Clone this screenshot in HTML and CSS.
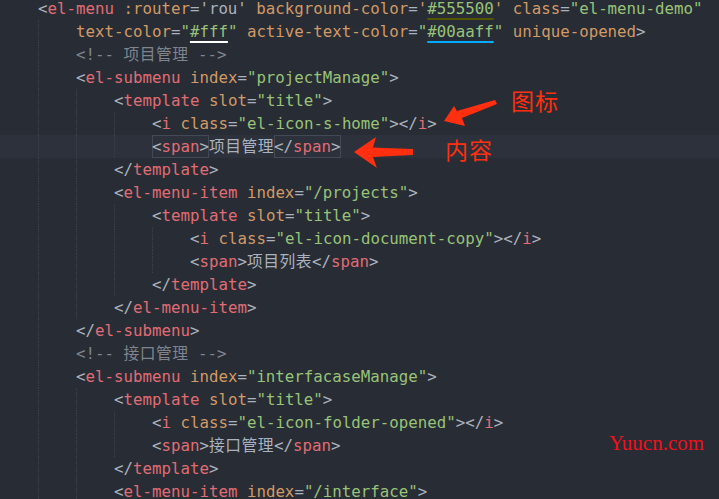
FILE: index.html
```html
<!DOCTYPE html>
<html>
<head>
<meta charset="utf-8">
<link rel="stylesheet" href="styles.css">
</head>
<body>
<div class="editor">
  <div class="code">
    <div class="ln"><span class="ind"></span>&lt;<span class="t">el-menu</span> <span class="a">:router</span>='rou' <span class="a">background-color</span>=<span class="a">'</span><span class="s u-olive">#555500</span><span class="a">'</span> <span class="a">class</span>=<span class="s">"el-menu-demo"</span></div>
    <div class="ln"><span class="ind"></span><span class="ind"></span><span class="a">text-color</span>=<span class="s">"<span class="u-white">#fff</span>"</span> <span class="a">active-text-color</span>=<span class="s">"<span class="u-blue">#00aaff</span>"</span> <span class="a">unique-opened</span>&gt;</div>
    <div class="ln"><span class="ind"></span><span class="ind"></span><span class="c">&lt;!-- <span class="cjk">项目管理</span> --&gt;</span></div>
    <div class="ln"><span class="ind"></span><span class="ind"></span>&lt;<span class="t">el-submenu</span> <span class="a">index</span>=<span class="s">"projectManage"</span>&gt;</div>
    <div class="ln"><span class="ind"></span><span class="ind"></span><span class="ind"></span>&lt;<span class="t">template</span> <span class="a">slot</span>=<span class="s">"title"</span>&gt;</div>
    <div class="ln"><span class="ind"></span><span class="ind"></span><span class="ind"></span><span class="ind"></span>&lt;<span class="t">i</span> <span class="a">class</span>=<span class="s">"el-icon-s-home"</span>&gt;&lt;/<span class="t">i</span>&gt;</div>
    <div class="ln cur"><span class="ind"></span><span class="ind"></span><span class="ind"></span><span class="ind"></span><span class="match">&lt;<span class="t">span</span>&gt;</span><span class="cjk">项目管理</span><span class="match">&lt;/<span class="t">span</span>&gt;</span></div>
    <div class="ln"><span class="ind"></span><span class="ind"></span><span class="ind"></span>&lt;/<span class="t">template</span>&gt;</div>
    <div class="ln"><span class="ind"></span><span class="ind"></span><span class="ind"></span>&lt;<span class="t">el-menu-item</span> <span class="a">index</span>=<span class="s">"/projects"</span>&gt;</div>
    <div class="ln"><span class="ind"></span><span class="ind"></span><span class="ind"></span><span class="ind"></span>&lt;<span class="t">template</span> <span class="a">slot</span>=<span class="s">"title"</span>&gt;</div>
    <div class="ln"><span class="ind"></span><span class="ind"></span><span class="ind"></span><span class="ind"></span><span class="ind"></span>&lt;<span class="t">i</span> <span class="a">class</span>=<span class="s">"el-icon-document-copy"</span>&gt;&lt;/<span class="t">i</span>&gt;</div>
    <div class="ln"><span class="ind"></span><span class="ind"></span><span class="ind"></span><span class="ind"></span><span class="ind"></span>&lt;<span class="t">span</span>&gt;<span class="cjk">项目列表</span>&lt;/<span class="t">span</span>&gt;</div>
    <div class="ln"><span class="ind"></span><span class="ind"></span><span class="ind"></span><span class="ind"></span>&lt;/<span class="t">template</span>&gt;</div>
    <div class="ln"><span class="ind"></span><span class="ind"></span><span class="ind"></span>&lt;/<span class="t">el-menu-item</span>&gt;</div>
    <div class="ln"><span class="ind"></span><span class="ind"></span>&lt;/<span class="t">el-submenu</span>&gt;</div>
    <div class="ln"><span class="ind"></span><span class="ind"></span><span class="c">&lt;!-- <span class="cjk">接口管理</span> --&gt;</span></div>
    <div class="ln"><span class="ind"></span><span class="ind"></span>&lt;<span class="t">el-submenu</span> <span class="a">index</span>=<span class="s">"interfacaseManage"</span>&gt;</div>
    <div class="ln"><span class="ind"></span><span class="ind"></span><span class="ind"></span>&lt;<span class="t">template</span> <span class="a">slot</span>=<span class="s">"title"</span>&gt;</div>
    <div class="ln"><span class="ind"></span><span class="ind"></span><span class="ind"></span><span class="ind"></span>&lt;<span class="t">i</span> <span class="a">class</span>=<span class="s">"el-icon-folder-opened"</span>&gt;&lt;/<span class="t">i</span>&gt;</div>
    <div class="ln"><span class="ind"></span><span class="ind"></span><span class="ind"></span><span class="ind"></span>&lt;<span class="t">span</span>&gt;<span class="cjk">接口管理</span>&lt;/<span class="t">span</span>&gt;</div>
    <div class="ln"><span class="ind"></span><span class="ind"></span><span class="ind"></span>&lt;/<span class="t">template</span>&gt;</div>
    <div class="ln"><span class="ind"></span><span class="ind"></span><span class="ind"></span>&lt;<span class="t">el-menu-item</span> <span class="a">index</span>=<span class="s">"/interface"</span>&gt;</div>
  </div>

  <svg class="arrows" width="719" height="499" viewBox="0 0 719 499">
    <polygon points="444,121 454,106 457,111 495,100 497,104 462,118 465,126" fill="#ff2f0f"/>
    <polygon points="354,152 376,137 373,147.5 413,149 413,155 373,157 377,168" fill="#ff2f0f"/>
  </svg>
  <div class="note note-icon">图标</div>
  <div class="note note-content">内容</div>
  <div class="watermark">Yuucn.com</div>
</div>
</body>
</html>
```

FILE: styles.css
```css
html, body {
  margin: 0;
  padding: 0;
  background: #282c34;
  overflow: hidden;
}

.editor {
  position: relative;
  width: 719px;
  height: 499px;
  overflow: hidden;
  background: #282c34;
}

.code {
  margin-top: -3px;
  font-family: "DejaVu Sans Mono", "Noto Sans CJK SC", monospace;
  font-size: 15.78px;
  line-height: 23px;
  color: #abb2bf;
}

.ln {
  height: 23px;
  white-space: pre;
  overflow: hidden;
}

.ln.cur {
  background: #2c313b;
}

.ind {
  display: inline-block;
  vertical-align: top;
  width: 38px;
  height: 23px;
}

.ind + .ind {
  background-image: linear-gradient(to bottom, #3d424c 50%, transparent 50%);
  background-size: 1px 2px;
  background-repeat: repeat-y;
  background-position: 0 0;
}

.cjk {
  letter-spacing: 0.5px;
}

.t { color: #e06c75; }
.a { color: #d19a66; }
.s { color: #98c379; }
.c { color: #7f848e; }

.match {
  display: inline-block;
  vertical-align: top;
  height: 23px;
  box-shadow: inset 0 0 0 1px #444a55;
}

.u-white, .u-olive, .u-blue {
  text-decoration-line: underline;
  text-decoration-thickness: 2px;
  text-underline-offset: 4px;
}
.u-white { text-decoration-color: #ffffff; }
.u-olive { text-decoration-color: #555500; }
.u-blue { text-decoration-color: #00aaff; }

.arrows {
  position: absolute;
  left: 0;
  top: 0;
  pointer-events: none;
}

.note {
  position: absolute;
  font-family: "Noto Sans CJK SC", sans-serif;
  font-size: 23px;
  line-height: 1;
  color: #ff2f0f;
  letter-spacing: 1px;
}

.note-icon {
  left: 511px;
  top: 89px;
}

.note-content {
  left: 445px;
  top: 138px;
}

.watermark {
  position: absolute;
  left: 609px;
  top: 433px;
  font-family: "Liberation Serif", serif;
  font-size: 21px;
  line-height: 1;
  color: #f0101c;
}
```
